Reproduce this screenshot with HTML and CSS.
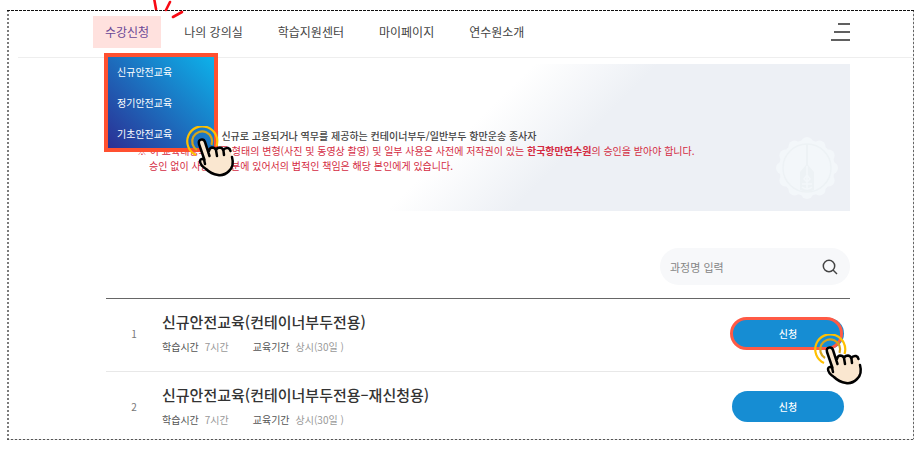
FILE: index.html
```html
<!DOCTYPE html>
<html lang="ko">
<head>
<meta charset="utf-8">
<meta name="viewport" content="width=device-width, initial-scale=1">
<title>수강신청</title>
<link rel="stylesheet" href="styles.css">
</head>
<body>
<svg class="defs" aria-hidden="true">
  <symbol id="tap" viewBox="0 0 52 54">
    <path d="M10 29A15 15 0 1 1 30.500 20" fill="none" stroke="#ffc000" stroke-width="2.200"/>
    <path d="M11 24A10 10 0 1 1 25.500 19" fill="none" stroke="#d5a51c" stroke-width="2.200"/>
    <path d="M18 33L13 18Q12 14 15.500 13.500Q18 13 19 16L23 26Q23 22 26 21.500Q29 21 30 24Q31 21 34 21.500Q37 21.500 37.500 24Q39 21 42 21.500Q45 22 45 26L46.500 34Q47 41 43 45Q38 50 32 49Q26 48 20 43L14.500 38Q13 33 18 33Z" fill="#fae7d0"/>
    <path d="M18.500 34L13 18Q12 14 15.500 13.500Q18 13 19 16L23.500 30M23 25Q23.500 22 26 21.500Q29 21.500 30 24L31 30M30 24Q31 21.500 34 21.500Q37 22 37.500 25L38 29M37.500 24Q39 21.500 42 22Q44 22.500 44.500 25M46 31Q48.500 40 43 45Q38 50 32 49Q25 48 20 43Q14 39 14 35Q14.500 32 18 33.500L19 38" fill="none" stroke="#000" stroke-width="2.500" stroke-linecap="round" stroke-linejoin="round"/>
  </symbol>
</svg>
<svg class="spark" viewBox="0 0 40 20" aria-hidden="true">
  <path d="M6 -2L8 9M22 2L18 10M25 17L34 12" fill="none" stroke="#f80a14" stroke-width="2.600" stroke-linecap="round"/>
</svg>
<div class="frame">
  <header class="header">
    <nav class="nav">
      <div class="nav-group">
        <a class="nav-link active" href="#">수강신청</a>
        <div class="menu">
          <a href="#">신규안전교육</a>
          <a href="#">정기안전교육</a>
          <a href="#">기초안전교육</a>
          <svg class="tap tap-menu" aria-hidden="true"><use href="#tap"/></svg>
        </div>
      </div>
      <a class="nav-link" href="#">나의 강의실</a>
      <a class="nav-link" href="#">학습지원센터</a>
      <a class="nav-link" href="#">마이페이지</a>
      <a class="nav-link" href="#">연수원소개</a>
    </nav>
    <button class="hamburger" type="button" aria-label="전체 메뉴"><i></i><i></i><i></i></button>
  </header>
  <main class="content">
    <section class="banner">
      <div class="notice">
        <p class="target">항만에 신규로 고용되거나 역무를 제공하는 컨테이너부두/일반부두 항만운송 종사자</p>
        <p class="warn">※ 이 교육내용의 모든 형태의 변형(사진 및 동영상 촬영) 및 일부 사용은 사전에 저작권이 있는 <b>한국항만연수원</b>의 승인을 받아야 합니다.</p>
        <p class="warn sub">승인 없이 사용한 부분에 있어서의 법적인 책임은 해당 본인에게 있습니다.</p>
      </div>
      <svg class="emblem" viewBox="0 0 64 64" aria-hidden="true">
        <g fill="#f3f7fa">
          <circle cx="32" cy="32" r="28"/>
          <circle cx="32" cy="7" r="6"/><circle cx="44.500" cy="10.400" r="6"/><circle cx="53.600" cy="19.500" r="6"/><circle cx="57" cy="32" r="6"/>
          <circle cx="53.600" cy="44.500" r="6"/><circle cx="44.500" cy="53.600" r="6"/><circle cx="32" cy="57" r="6"/><circle cx="19.500" cy="53.600" r="6"/>
          <circle cx="10.400" cy="44.500" r="6"/><circle cx="7" cy="32" r="6"/><circle cx="10.400" cy="19.500" r="6"/><circle cx="19.500" cy="10.400" r="6"/>
        </g>
        <circle cx="32" cy="32" r="24" fill="none" stroke="#edf2f5" stroke-width="1.500"/>
        <path d="M31 8h2v21l6 7v18q-7 3-14 0V36l6-7z" fill="#edf2f5"/>
        <path d="M32 30v23M29 43l3-4 3 4-3 3zM27 48h10M27 51q5 4 10 0" fill="none" stroke="#f3f7fa" stroke-width="1.500"/>
      </svg>
    </section>
    <form class="search">
      <input type="text" aria-label="과정명" placeholder="과정명 입력">
      <button type="button" aria-label="검색">
        <svg viewBox="0 0 16 16" aria-hidden="true"><circle cx="7" cy="7" r="5.700"/><path d="M11 11L15 15"/></svg>
      </button>
    </form>
    <ol class="courses">
      <li class="course">
        <span class="num">1</span>
        <div>
          <h2>신규안전교육(컨테이너부두전용)</h2>
          <dl><dt>학습시간</dt><dd>7시간</dd><dt>교육기간</dt><dd>상시(30일 )</dd></dl>
        </div>
        <div class="action">
          <button class="apply" type="button">신청</button>
          <span class="ring"></span>
          <svg class="tap tap-apply" aria-hidden="true"><use href="#tap"/></svg>
        </div>
      </li>
      <li class="course">
        <span class="num">2</span>
        <div>
          <h2>신규안전교육(컨테이너부두전용–재신청용)</h2>
          <dl><dt>학습시간</dt><dd>7시간</dd><dt>교육기간</dt><dd>상시(30일 )</dd></dl>
        </div>
        <div class="action"><button class="apply" type="button">신청</button></div>
      </li>
    </ol>
  </main>
</div>
</body>
</html>
```
FILE: styles.css
```css
* { box-sizing: border-box; }
body {
  position: relative;
  margin: 0;
  background: #fff;
  color: #444;
  font-family: "Noto Sans CJK KR", sans-serif;
  font-size: 10px;
}
p, h2, dl, dd, ol { margin: 0; padding: 0; }
a { color: inherit; text-decoration: none; }
button { padding: 0; border: 0; background: none; font: inherit; cursor: pointer; }

.defs { position: absolute; width: 0; height: 0; }
.spark { position: absolute; z-index: 3; left: 148px; top: 0; width: 40px; height: 20px; }

/* Fine dotted outline: 4px period on every side */
.frame {
  margin: 10px 10px 10px 7px;
  padding: 1px 1px 1px 2px;
  background:
    repeating-linear-gradient(90deg, #111 0 3px, #fff 3px 4px) top / 100% 1px no-repeat,
    repeating-linear-gradient(90deg, #555 0 2px, #ddd 2px 4px) bottom / 100% 1px no-repeat,
    repeating-linear-gradient(#7c7c7c 0 2px, #fff 2px 4px) left / 2px 100% no-repeat,
    repeating-linear-gradient(#666 0 2px, #ddd 2px 4px) right / 1px 100% no-repeat;
}
.header {
  display: flex;
  align-items: center;
  justify-content: space-between;
  height: 47px;
  margin-left: 9px;
  padding: 0 63px 4px 75px;
  border-bottom: 1px solid #eee;
}
.nav { display: flex; gap: 11px; }
.nav-group { position: relative; }
.nav-link {
  display: block;
  padding: 0 12px;
  font-size: 12px;
  line-height: 32px;
  white-space: nowrap;
}
.nav-link.active { background: #ffe1de; color: #6a4796; }
.menu {
  position: absolute;
  z-index: 2;
  left: 11px;
  top: 37px;
  display: grid;
  gap: 3px;
  width: 114px;
  padding-top: 1px;
  border: 4px solid #ff5030;
  background: linear-gradient(45deg, #2b2f94, #0db2ea);
  color: #fff;
}
.menu a { padding-left: 9px; line-height: 28px; }
.tap { position: absolute; width: 52px; height: 54px; pointer-events: none; }
.tap-menu { left: 78px; top: 69px; }
.tap-apply { left: 82px; top: 16px; }

.hamburger {
  display: grid;
  justify-items: end;
  gap: 6px;
  width: 20px;
}
.hamburger i { width: 12px; height: 2px; background: #606060; }
.hamburger i:nth-child(2) { width: 16px; }
.hamburger i:nth-child(3) { width: 19px; }

.content { padding: 6px 63px 0 97px; }
.banner {
  display: flex;
  justify-content: space-between;
  align-items: flex-start;
  height: 147px;
  padding: 64px 11px 0 31px;
  background: linear-gradient(135deg, #fff 48%, #edf0f5 62%);
}
.notice { line-height: 15px; white-space: nowrap; }
.target { padding-left: 54px; font-weight: 500; }
.warn { color: #d42b42; }
.sub { padding-left: 12px; }
.emblem { width: 64px; height: 64px; margin-top: 8px; }

.search {
  display: flex;
  align-items: center;
  width: 190px;
  height: 37px;
  margin: 37px 0 13px auto;
  padding: 0 12px 0 10px;
  border-radius: 20px;
  background: #f7f8fa;
}
.search input {
  flex: 1;
  min-width: 0;
  padding: 0;
  border: 0;
  outline: 0;
  background: none;
  color: #444;
  font: inherit;
  font-size: 11px;
}
.search input::placeholder { color: #858585; opacity: 1; }
.search button { height: 16px; }
.search svg { display: block; width: 16px; height: 16px; fill: none; stroke: #444; stroke-width: 1.500; }

.courses { border-top: 1px solid #666; list-style: none; }
.course {
  display: grid;
  grid-template-columns: 56px 1fr auto;
  align-items: center;
  padding: 11px 6px 14px 0;
  border-bottom: 1px solid #e8e8e8;
}
.course:last-child { padding-bottom: 9px; border-bottom: 0; }
.num { color: #777; text-align: center; }
.course h2 { color: #333; font-size: 15px; font-weight: 500; line-height: 24px; }
.course dl { display: flex; padding-top: 3px; line-height: 20px; }
.course dt { margin-right: 6px; color: #555; }
.course dd { margin-right: 24px; color: #999; }
.action { position: relative; }
.apply {
  display: block;
  width: 112px;
  height: 31px;
  border-radius: 16px;
  background: #168dd3;
  color: #fff;
  font-weight: 500;
}
.ring {
  position: absolute;
  left: -2px;
  top: -1px;
  width: 113px;
  height: 33px;
  border: 3px solid #ff5a45;
  border-radius: 17px;
  pointer-events: none;
}
```
